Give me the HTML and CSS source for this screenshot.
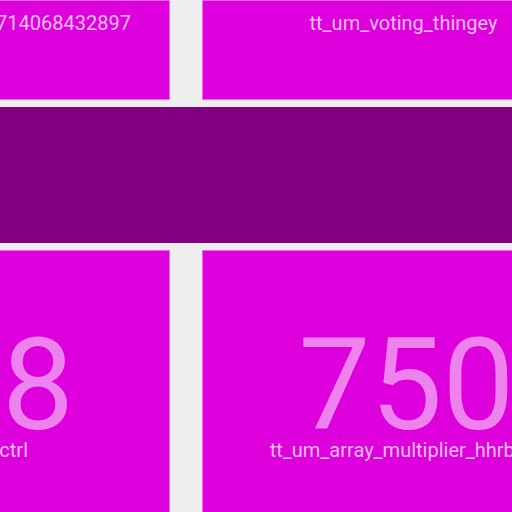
FILE: index.html
```html
<!DOCTYPE html>
<html>
<head>
<meta charset="utf-8">
<link rel="stylesheet" href="styles.css">
</head>
<body>
<div class="board">
  <div class="tile tile-left">
    <div class="title">714068432897</div>
  </div>
  <div class="tile tile-right">
    <div class="title">tt_um_voting_thingey</div>
  </div>
  <div class="band"></div>
  <div class="tile tile-left stat">
    <div class="num num-left">28</div>
    <div class="label label-left">ctrl</div>
  </div>
  <div class="tile tile-right stat">
    <div class="num num-right">750</div>
    <div class="label">tt_um_array_multiplier_hhrb98</div>
  </div>
</div>
</body>
</html>
```

FILE: styles.css
```css
html, body {
  margin: 0;
  padding: 0;
  background: #eeeeee;
  width: 512px;
  height: 512px;
  overflow: hidden;
  font-family: Roboto, "Noto Sans", sans-serif;
}

.board {
  display: grid;
  grid-template-columns: 403px 403px;
  grid-template-rows: 100px 136px 270px;
  column-gap: 32px;
  row-gap: 7px;
  margin-left: -233px;
  width: 838px;
}

.tile {
  background: #dd00dd;
  border: 1px solid #ea6aea;
  box-sizing: border-box;
  overflow: hidden;
  white-space: nowrap;
}

.tile-left {
  text-align: right;
}

.tile-right {
  text-align: center;
}

.title {
  font-size: 20px;
  line-height: 24px;
  color: #f8bef8;
  padding-top: 10px;
}

.tile-left .title {
  padding-right: 38px;
}

.band {
  grid-column: 1 / 3;
  background: #800080;
}

.stat {
  padding-top: 81px;
}

.num {
  font-size: 128px;
  line-height: 106px;
  color: #ee82ee;
}

.num-left {
  padding-right: 95px;
}

.num-right {
  padding-left: 6px;
}

.label {
  font-size: 20px;
  line-height: 24px;
  color: #f8bef8;
}

.label-left {
  padding-right: 141px;
}
```
